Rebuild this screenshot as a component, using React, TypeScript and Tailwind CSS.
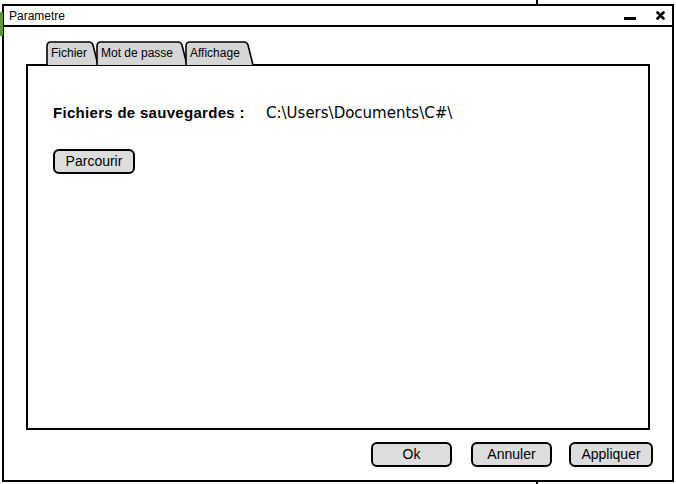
import React from "react";

const sans = { fontFamily: '"Liberation Sans", Arial, sans-serif' };

function Tab({ label, width }: { label: string; width: number }) {
  const h = 24;
  const w = width;
  return (
    <div className="relative -mr-[3px] flex h-[24px] items-center pl-[5px] text-[12px] text-black" style={{ width: w }}>
      <svg className="absolute inset-0" width={w} height={h} viewBox={`0 0 ${w} ${h}`}>
        <path
          d={`M1 ${h} V5 Q1 1 5 1 H${w - 10} Q${w - 7} 1 ${w - 6} 4 L${w - 1} ${h}`}
          fill="#d5d5d5"
          stroke="black"
          strokeWidth="1.6"
        />
      </svg>
      <span className="relative">{label}</span>
    </div>
  );
}

function Btn({ label, w }: { label: string; w: number }) {
  return (
    <div
      className="flex h-[25px] items-center justify-center rounded-[6px] border-2 border-black bg-[#dddddd] text-[14px] text-black"
      style={{ width: w }}
    >
      {label}
    </div>
  );
}

export default function App() {
  return (
    <div className="relative h-[484px] w-[676px] overflow-hidden bg-white" style={sans}>
      <div className="absolute left-0 top-[12px] h-[24px] w-[3px] bg-[#5b9a3c]" />
      <div className="absolute left-[536px] top-0 h-[5px] w-[2px] bg-black" />
      <div className="absolute left-[536px] top-[482px] h-[2px] w-[2px] bg-black" />
      <div className="ml-[2px] mt-[4px] flex h-[478px] w-[672px] flex-col border-2 border-black bg-white">
        <div className="flex h-[21px] items-center border-b-2 border-black pl-[5px] pr-[7px]">
          <span className="text-[12px] text-black">Parametre</span>
          <div className="ml-auto flex items-center gap-[20px]">
            <div className="mt-[5px] h-[3px] w-[12px] bg-black" />
            <svg width="9" height="9" viewBox="0 0 9 9">
              <path d="M1.5 1.5 L7.5 7.5 M7.5 1.5 L1.5 7.5" stroke="black" strokeWidth="2.6" strokeLinecap="round" />
            </svg>
          </div>
        </div>
        <div className="flex flex-1 flex-col px-[22px] pt-[14px]">
          <div className="flex pl-[20px]">
            <Tab label="Fichier" width={53} />
            <Tab label="Mot de passe" width={92} />
            <Tab label="Affichage" width={69} />
          </div>
          <div className="-mt-[1px] flex h-[366px] flex-col border-2 border-black px-[25px] pt-[36px]">
            <div className="flex items-center text-[15px] text-black">
              <span className="w-[213px] font-bold tracking-[0.3px]">Fichiers de sauvegardes :</span>
              <span style={{ fontFamily: '"DejaVu Sans", Verdana, sans-serif' }}>C:\Users\Documents\C#\</span>
            </div>
            <div className="mt-[24px]">
              <Btn label="Parcourir" w={82} />
            </div>
          </div>
          <div className="mt-[12px] flex justify-end gap-[22px]">
            <div className="-mr-[1px]"><Btn label="Ok" w={81} /></div>
            <div className="-ml-[2px]"><Btn label="Annuler" w={81} /></div>
            <div className="-ml-[5px] -mr-[3px]"><Btn label="Appliquer" w={84} /></div>
          </div>
        </div>
      </div>
    </div>
  );
}
